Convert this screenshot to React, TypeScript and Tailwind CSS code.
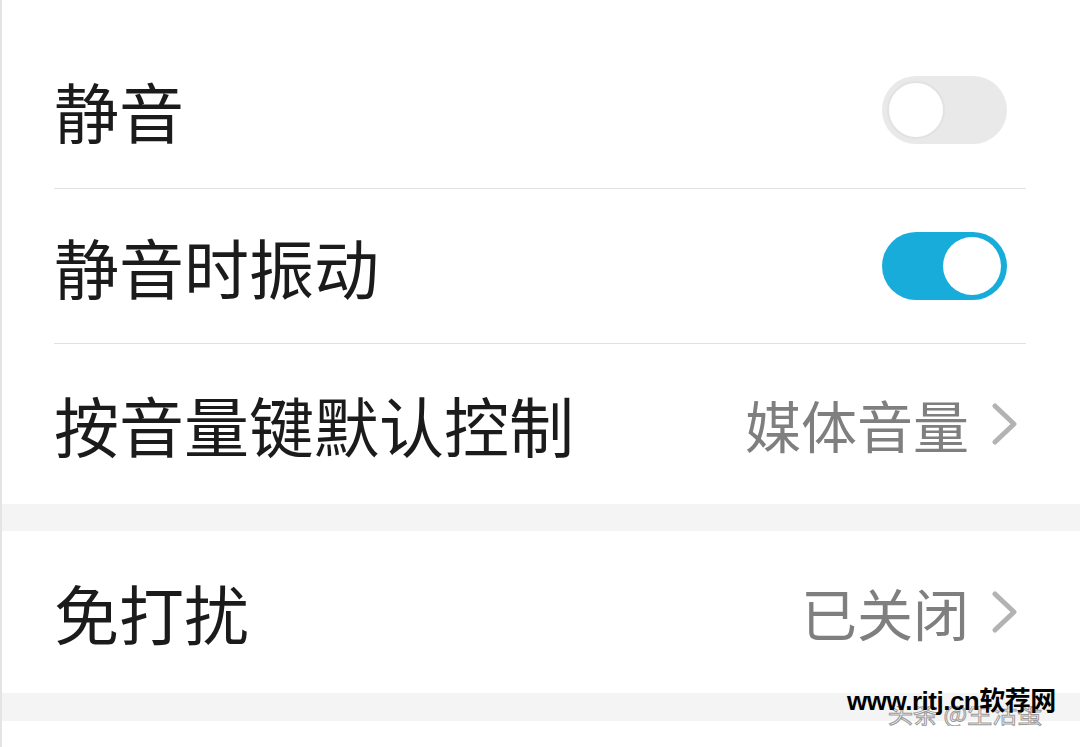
import React from "react";

const font = { fontFamily: '"Noto Sans CJK SC", "Noto Sans", sans-serif' };

function Toggle({ on }: { on: boolean }) {
  return on ? (
    <div className="flex h-[68px] w-[125px] items-center justify-end rounded-full bg-[#17acda] pr-[6px]">
      <div className="h-[58px] w-[58px] rounded-full bg-white" />
    </div>
  ) : (
    <div className="flex h-[68px] w-[125px] items-center justify-start rounded-full bg-[#e9e9e9] pl-[5px]">
      <div className="h-[58px] w-[58px] rounded-full border-2 border-[#e2e2e2] bg-white" />
    </div>
  );
}

function Chevron() {
  return (
    <svg width="26" height="42" viewBox="0 0 26 42" className="ml-[23px]">
      <path d="M3 3 L22 21 L3 39" fill="none" stroke="#b3b3b3" strokeWidth="5" strokeLinecap="round" strokeLinejoin="round" />
    </svg>
  );
}

export default function App() {
  return (
    <div className="relative h-[747px] w-[1080px] overflow-hidden border-l-2 border-[#e4e4e4] bg-white" style={font}>
      {/* Row 1 */}
      <div className="flex h-[188px] items-center justify-between pl-[52px] pr-[73px] pt-[32px]">
        <span className="text-[65px] leading-none text-[#1b1b1b]">静音</span>
        <Toggle on={false} />
      </div>
      <div className="ml-[52px] mr-[54px] h-px bg-[#e2e2e2]" />
      {/* Row 2 */}
      <div className="flex h-[154px] items-center justify-between pl-[52px] pr-[73px]">
        <span className="text-[65px] leading-none text-[#1b1b1b]">静音时振动</span>
        <Toggle on={true} />
      </div>
      <div className="ml-[52px] mr-[54px] h-px bg-[#e2e2e2]" />
      {/* Row 3 */}
      <div className="flex h-[160px] items-center justify-between pl-[52px] pr-[62px]">
        <span className="text-[65px] leading-none text-[#1b1b1b]">按音量键默认控制</span>
        <div className="flex items-center">
          <span className="text-[56px] leading-none text-[#7f7f7f]">媒体音量</span>
          <Chevron />
        </div>
      </div>
      <div className="h-[27px] bg-[#f4f4f4]" />
      {/* Row 4 */}
      <div className="flex h-[162px] items-center justify-between pl-[52px] pr-[62px]">
        <span className="text-[65px] leading-none text-[#1b1b1b]">免打扰</span>
        <div className="flex items-center">
          <span className="text-[56px] leading-none text-[#7f7f7f]">已关闭</span>
          <Chevron />
        </div>
      </div>
      <div className="h-[28px] bg-[#f4f4f4]" />
      <div className="h-[25px] bg-white" />

      {/* watermarks */}
      <div className="absolute left-[886px] top-[706px] h-[20px] overflow-hidden">
        <div className="-mt-[9px] whitespace-nowrap text-[25px] leading-[30px] text-white" style={{ WebkitTextStroke: "1px #9a9a9a" }}>
          头条 @生活蛋
        </div>
      </div>
      <div
        className="absolute left-[845px] top-[686px] whitespace-nowrap text-[26px] font-bold leading-[30px] tracking-[-0.5px] text-black"
        style={{ fontFamily: '"Liberation Sans", "Noto Sans CJK SC", sans-serif' }}
      >
        www.ritj.cn软荐网
      </div>
    </div>
  );
}
